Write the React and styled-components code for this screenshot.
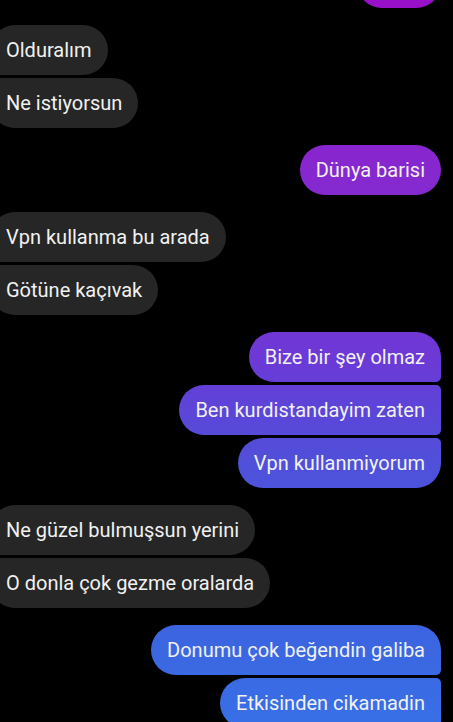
import React from "react";
import styled, { createGlobalStyle, css } from "styled-components";

const Global = createGlobalStyle`
  html, body {
    margin: 0;
    padding: 0;
    background: #000;
    overflow: hidden;
  }
  #root { min-height: 722px; }
`;

const Thread = styled.div`
  display: flex;
  flex-direction: column;
  gap: 17px;
  padding: 0 12px 0 0;
  margin-top: -42px;
  font-family: Roboto, "Noto Sans", sans-serif;
`;

const Group = styled.div`
  display: flex;
  flex-direction: column;
  gap: 3px;
  align-items: ${(p) => (p.$mine ? "flex-end" : "flex-start")};
`;

const BIG = 25;
const SMALL = 5;

const radius = (mine, pos) => {
  const top = pos === "first" || pos === "single" ? BIG : SMALL;
  const bottom = pos === "last" || pos === "single" ? BIG : SMALL;
  return mine
    ? `${BIG}px ${top}px ${bottom}px ${BIG}px`
    : `${top}px ${BIG}px ${BIG}px ${bottom}px`;
};

const Bubble = styled.div`
  box-sizing: border-box;
  height: 50px;
  display: flex;
  align-items: center;
  padding: 0 16px;
  font-size: 20px;
  line-height: 24px;
  color: #f1f1f1;
  white-space: nowrap;
  ${(p) => p.$width && css`width: ${p.$width}px;`}
  border-radius: ${(p) => radius(p.$mine, p.$pos)};
  ${(p) =>
    p.$mine
      ? css`
          background: linear-gradient(
            180deg,
            #9810c8 0px,
            #8c22cd 120px,
            #8628cf 175px,
            #6d39d6 357px,
            #5c45d8 410px,
            #5050da 463px,
            #3f60df 600px,
            #3b67e1 650px,
            #386fe6 722px
          );
          background-attachment: fixed;
        `
      : css`
          background: #262626;
          margin-left: -10px;
        `}
`;

const groups = [
  { mine: true, items: [""], width: 84 },
  { mine: false, items: ["Olduralım", "Ne istiyorsun"] },
  { mine: true, items: ["Dünya barisi"] },
  { mine: false, items: ["Vpn kullanma bu arada", "Götüne kaçıvak"] },
  {
    mine: true,
    items: ["Bize bir şey olmaz", "Ben kurdistandayim zaten", "Vpn kullanmiyorum"],
  },
  { mine: false, items: ["Ne güzel bulmuşsun yerini", "O donla çok gezme oralarda"] },
  { mine: true, items: ["Donumu çok beğendin galiba", "Etkisinden cikamadin"], continues: true },
];

const posOf = (i, n, continues) => {
  const isFirst = i === 0;
  const isLast = i === n - 1 && !continues;
  if (isFirst && isLast) return "single";
  if (isFirst) return "first";
  if (isLast) return "last";
  return "middle";
};

export default function App() {
  return (
    <>
      <Global />
      <Thread>
        {groups.map((g, gi) => (
          <Group key={gi} $mine={g.mine}>
            {g.items.map((t, i) => (
              <Bubble
                key={i}
                $mine={g.mine}
                $width={g.width}
                $pos={posOf(i, g.items.length, g.continues)}
              >
                {t}
              </Bubble>
            ))}
          </Group>
        ))}
      </Thread>
    </>
  );
}
